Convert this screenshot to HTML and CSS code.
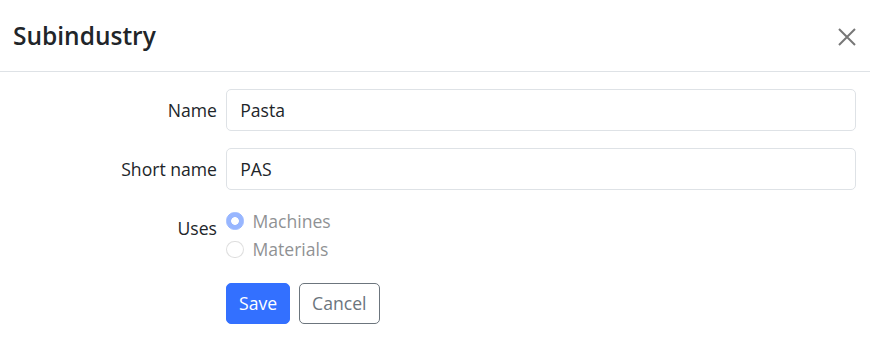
FILE: index.html
```html
<!DOCTYPE html>
<html lang="en">
<head>
<meta charset="utf-8">
<title>Subindustry</title>
<link rel="stylesheet" href="styles.css">
</head>
<body>
<div class="modal">
  <div class="modal-header">
    <h5 class="modal-title">Subindustry</h5>
    <button class="btn-close" type="button" aria-label="Close">
      <svg viewBox="0 0 18 18" width="18" height="18"><path d="M1 1L17 17M17 1L1 17" stroke="currentColor" stroke-width="2" fill="none"/></svg>
    </button>
  </div>
  <form class="modal-body">
    <div class="row">
      <label class="col-label">Name</label>
      <input class="form-control" type="text" value="Pasta">
    </div>
    <div class="row">
      <label class="col-label">Short name</label>
      <input class="form-control" type="text" value="PAS">
    </div>
    <div class="row">
      <label class="col-label">Uses</label>
      <div class="checks">
        <label class="form-check"><span class="radio checked"></span><span class="check-text">Machines</span></label>
        <label class="form-check"><span class="radio"></span><span class="check-text">Materials</span></label>
      </div>
    </div>
    <div class="row">
      <span></span>
      <div class="actions">
        <button class="btn btn-primary" type="button">Save</button>
        <button class="btn btn-outline" type="button">Cancel</button>
      </div>
    </div>
  </form>
</div>
</body>
</html>
```

FILE: styles.css
```css
* { box-sizing: border-box; }
html, body {
  margin: 0;
  padding: 0;
  background: #fff;
}
body {
  font-family: "Open Sans", "Noto Sans", sans-serif;
  font-size: 17.6px;
  line-height: 26.4px;
  color: #212529;
}
.modal { width: 870px; }
.modal-header {
  display: flex;
  align-items: center;
  justify-content: space-between;
  height: 72px;
  padding: 0 14px 0 13px;
  border-bottom: 1px solid #dee2e6;
}
.modal-title {
  margin: 0;
  font-size: 24.5px;
  font-weight: 600;
  line-height: 29px;
}
.btn-close {
  border: 0;
  background: transparent;
  padding: 0;
  width: 18px;
  height: 18px;
  color: #777;
  display: flex;
  margin-top: 2px;
}
.modal-body {
  padding: 17px 14px 0 0;
}
.row {
  display: grid;
  grid-template-columns: 217px 1fr;
  column-gap: 9px;
  margin-bottom: 17.6px;
}
.col-label {
  text-align: right;
  padding-top: 7.6px;
  padding-bottom: 7.6px;
  line-height: 26.4px;
}
.form-control {
  display: block;
  width: 100%;
  height: 41.8px;
  padding: 6.6px 13.2px;
  font: inherit;
  color: #212529;
  border: 1px solid #dee2e6;
  border-radius: 5px;
  background: #fff;
  outline: none;
}
.checks { display: flex; flex-direction: column; }
.form-check {
  display: flex;
  align-items: flex-start;
  min-height: 26.4px;
  margin-bottom: 2.2px;
  opacity: .5;
}
.radio {
  flex: none;
  width: 17.6px;
  height: 17.6px;
  margin-top: 4.4px;
  margin-right: 8.8px;
  border-radius: 50%;
  border: 1px solid rgba(0,0,0,.25);
  background: #fff;
}
.radio.checked {
  border-color: #3370ff;
  background: radial-gradient(circle, #fff 0 3.5px, #3370ff 4.2px);
}
.actions {
  display: flex;
  gap: 9px;
}
.btn {
  height: 41.8px;
  padding: 0 12px;
  font: inherit;
  border-radius: 5px;
  border: 1px solid transparent;
  cursor: pointer;
}
.btn-primary {
  background: #3370ff;
  border-color: #3370ff;
  color: #fff;
}
.btn-outline {
  background: #fff;
  border-color: #6c757d;
  color: #6c757d;
}
```
